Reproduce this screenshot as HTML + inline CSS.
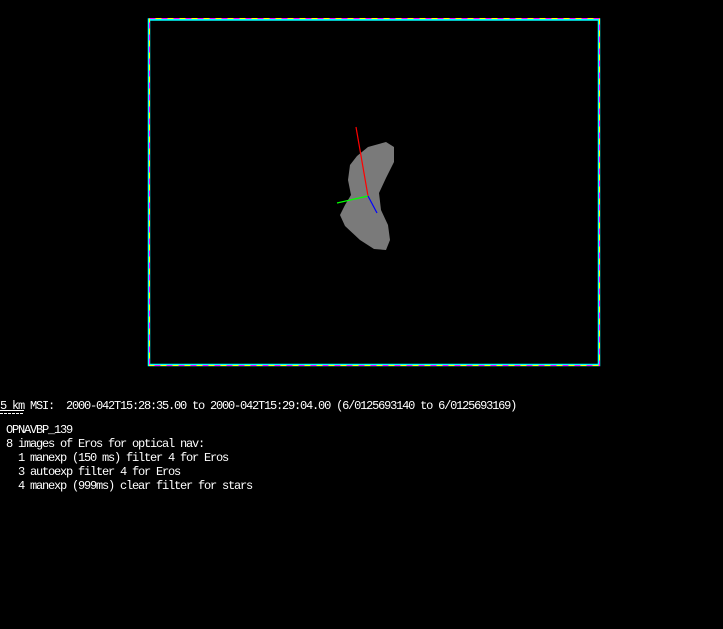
<!DOCTYPE html>
<html><head><style>
html,body{margin:0;padding:0;background:#000;width:723px;height:629px;overflow:hidden;position:relative}
.t{position:absolute;color:#fff;font-family:"Liberation Mono",monospace;font-size:12px;letter-spacing:-1.2px;white-space:pre;line-height:14px}
</style></head><body>
<svg width="723" height="629" style="position:absolute;left:0;top:0">
<rect x="149" y="19.5" width="450" height="345.5" fill="none" stroke="#00ffff" stroke-width="2.5"/>
<rect x="149.5" y="18.5" width="450" height="347" fill="none" stroke="#ff00ff" stroke-width="1" stroke-dasharray="6,6"/>
<rect x="149.5" y="18.5" width="450" height="347" fill="none" stroke="#ffff00" stroke-width="1" stroke-dasharray="6,6" stroke-dashoffset="6"/>
<polygon points="357,156 368,147 386,142 394,147 394,162 386,178 379,193 381,210 388,225 390,240 386,250 374,249 360,240 345,226 340,215 345,205 351,195 348,180 350,165" fill="#7a7a7a"/>
<line x1="356" y1="127" x2="368" y2="196" stroke="#ff0000" stroke-width="1.2"/>
<line x1="337" y1="203" x2="368" y2="196" stroke="#00ff00" stroke-width="1.2"/>
<line x1="368" y1="196" x2="377" y2="213" stroke="#0000ff" stroke-width="1.2"/>
<line x1="0" y1="410.5" x2="24" y2="410.5" stroke="#fff"/>
<line x1="0" y1="413.5" x2="24" y2="413.5" stroke="#fff" stroke-dasharray="3,1"/>
</svg>
<div class="t" style="left:0;top:399px">5 km MSI:  2000-042T15:28:35.00 to 2000-042T15:29:04.00 (6/0125693140 to 6/0125693169)</div>
<div class="t" style="left:6px;top:423px">OPNAVBP_139
8 images of Eros for optical nav:
  1 manexp (150 ms) filter 4 for Eros
  3 autoexp filter 4 for Eros
  4 manexp (999ms) clear filter for stars</div>
</body></html>
